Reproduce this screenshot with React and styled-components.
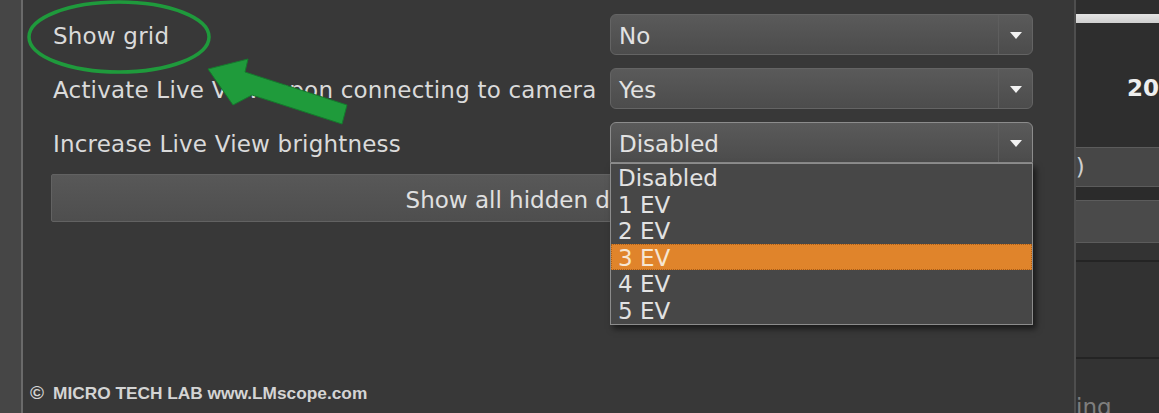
import styled, { createGlobalStyle } from "styled-components";

const GlobalStyle = createGlobalStyle`
  html, body {
    margin: 0;
    padding: 0;
    background: #383838;
  }
  * {
    box-sizing: border-box;
  }
`;

const Screen = styled.div`
  position: relative;
  width: 1159px;
  height: 413px;
  display: flex;
  overflow: hidden;
  font-family: "DejaVu Sans", Verdana, sans-serif;
  font-size: 23px;
  color: #dedede;
`;

const LeftStrip = styled.div`
  width: 23px;
  flex-shrink: 0;
  background: #464646;
  border-right: 2px solid #6a6a6a;
`;

const MainPanel = styled.div`
  width: 1051px;
  flex-shrink: 0;
  background: #383838;
  display: flex;
  flex-direction: column;
  padding: 14px 0 0 29px;
`;

const Settings = styled.div`
  display: grid;
  grid-template-columns: 558px 423px;
  row-gap: 13px;
  align-items: center;
`;

const Label = styled.div`
  padding: 4px 0 0 1px;
  white-space: nowrap;
  line-height: 37px;
  letter-spacing: 0.2px;
  color: #dadada;
`;

const Select = styled.div`
  position: relative;
  height: 41px;
  display: flex;
  align-items: center;
  background: linear-gradient(#5a5a5a, #4c4c4c);
  border: 1px solid ${(p) => (p.open ? "#8c8c8c" : "#646464")};
  border-radius: ${(p) => (p.open ? "6px 6px 0 0" : "6px")};
`;

const SelectValue = styled.div`
  flex: 1;
  padding: 3px 0 0 8px;
  color: #e2e2e2;
`;

const ArrowBox = styled.div`
  width: 34px;
  height: 100%;
  display: flex;
  align-items: center;
  justify-content: center;
  border-left: 1px solid #5e5e5e;
`;

const Caret = styled.div`
  width: 0;
  height: 0;
  border-left: 6px solid transparent;
  border-right: 6px solid transparent;
  border-top: 7px solid #f2f2f2;
  margin-top: 1px;
`;

const OptionList = styled.div`
  position: absolute;
  z-index: 2;
  top: 40px;
  left: -1px;
  right: -1px;
  background: #474747;
  border: 1px solid #8c8c8c;
  box-shadow: 3px 4px 6px rgba(0, 0, 0, 0.55);
`;

const Option = styled.div`
  height: 26.6px;
  line-height: 27px;
  padding-left: 6px;
  color: ${(p) => (p.active ? "#f6e6d2" : "#e2e2e2")};
  background: ${(p) => (p.active ? "#e0842b" : "transparent")};
  border: 1px dotted ${(p) => (p.active ? "#a85d18" : "transparent")};
`;

const WideButton = styled.div`
  width: 981px;
  height: 48px;
  margin: 11px 0 0 -1px;
  padding: 4px 0 0 0;
  display: flex;
  align-items: center;
  justify-content: center;
  background: linear-gradient(#585858, #4e4e4e);
  border: 1px solid #626262;
  border-radius: 2px;
  color: #e0e0e0;
  white-space: nowrap;
`;

const Footer = styled.div`
  margin: auto 0 0 -22px;
  padding-bottom: 9px;
  font-family: "Liberation Sans", Arial, sans-serif;
  font-weight: 700;
  font-size: 17.3px;
  color: #d4d4d4;
  white-space: nowrap;
`;

const Copy = styled.span`
  font-size: 19px;
  margin-right: 9px;
`;

const Seam = styled.div`
  width: 2px;
  flex-shrink: 0;
  background: #4e4e4e;
`;

const RightPanel = styled.div`
  flex: 1;
  display: flex;
  flex-direction: column;
  background: #2e2e2e;
  padding-top: 14px;
  overflow: hidden;
`;

const TopBar = styled.div`
  height: 9px;
  background: linear-gradient(#e4e4e4, #cfcfcf);
`;

const ValueArea = styled.div`
  height: 124px;
  display: flex;
  align-items: center;
  padding: 6px 0 0 51px;
  font-weight: 600;
  color: #eeeeee;
  white-space: nowrap;
`;

const Field = styled.div`
  height: ${(p) => p.h}px;
  display: flex;
  align-items: center;
  background: ${(p) => p.bg};
  border-top: 1px solid #5c5c5c;
  border-bottom: 1px solid #5c5c5c;
  white-space: nowrap;
  color: #cfcfcf;
`;

const Clipped = styled.span`
  margin-left: -15px;
`;

const Band = styled.div`
  height: ${(p) => p.h}px;
  background: ${(p) => p.bg};
  border-bottom: ${(p) => (p.line ? "2px solid #242424" : "none")};
`;

const Tail = styled.div`
  flex: 1;
  background: #333333;
  display: flex;
  align-items: flex-end;
  color: #7e7e7e;
  line-height: 20px;
  margin-bottom: -4px;
`;

const Annotations = styled.svg`
  position: absolute;
  inset: 0;
  pointer-events: none;
  z-index: 5;
`;

const settings = [
  { label: "Show grid", value: "No" },
  { label: "Activate Live View upon connecting to camera", value: "Yes" },
  { label: "Increase Live View brightness", value: "Disabled", open: true },
];

const levels = ["Disabled", "1 EV", "2 EV", "3 EV", "4 EV", "5 EV"];

export default function App() {
  return (
    <>
      <GlobalStyle />
      <Screen>
        <LeftStrip />
        <MainPanel>
          <Settings>
            {settings.map((s) => [
              <Label key={s.label}>{s.label}</Label>,
              <Select key={s.value} open={s.open}>
                <SelectValue>{s.value}</SelectValue>
                <ArrowBox>
                  <Caret />
                </ArrowBox>
                {s.open && (
                  <OptionList>
                    {levels.map((l) => (
                      <Option key={l} active={l === "3 EV"}>
                        {l}
                      </Option>
                    ))}
                  </OptionList>
                )}
              </Select>,
            ])}
          </Settings>
          <WideButton>Show all hidden dialogs</WideButton>
          <Footer>
            <Copy>©</Copy>MICRO TECH LAB www.LMscope.com
          </Footer>
        </MainPanel>
        <Seam />
        <RightPanel>
          <TopBar />
          <ValueArea>200</ValueArea>
          <Field h={40} bg="#474747">
            <Clipped>0)</Clipped>
          </Field>
          <Band h={13} bg="#2b2b2b" />
          <Field h={43} bg="#4a4a4a" />
          <Band h={19} bg="#333333" line />
          <Band h={97} bg="#323232" line />
          <Tail>ing</Tail>
        </RightPanel>
        <Annotations width="1159" height="413" viewBox="0 0 1159 413">
          <ellipse
            cx="119"
            cy="37"
            rx="90"
            ry="35"
            fill="none"
            stroke="#1f9a3c"
            strokeWidth="3.5"
          />
          <polygon
            points="208,69 248,59 245,72 347,105 342,124 252,95 233,105"
            fill="#1f9b3b"
            stroke="#157a2d"
            strokeWidth="1"
            strokeLinejoin="round"
          />
        </Annotations>
      </Screen>
    </>
  );
}
